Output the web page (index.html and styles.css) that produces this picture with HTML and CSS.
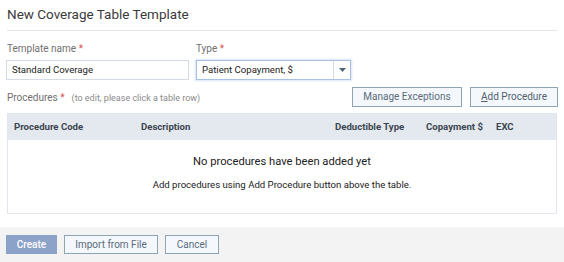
FILE: index.html
```html
<!DOCTYPE html>
<html>
<head>
<meta charset="utf-8">
<link rel="stylesheet" href="styles.css">
</head>
<body>
<div class="dialog">
  <div class="content">
    <h1 class="title">New Coverage Table Template</h1>
    <div class="fields">
      <div class="field name-field">
        <label class="label">Template name <span class="req">*</span></label>
        <div class="input">Standard Coverage</div>
      </div>
      <div class="field type-field">
        <label class="label">Type <span class="req">*</span></label>
        <div class="select">
          <span class="select-text">Patient Copayment, $</span>
          <span class="select-arrow"><svg width="7" height="4" viewBox="0 0 7 4"><path d="M0 0 L7 0 L3.5 4 Z" fill="#4d6577"/></svg></span>
        </div>
      </div>
    </div>
    <div class="proc-bar">
      <div class="proc-label">Procedures <span class="req">*</span><span class="hint">(to edit, please click a table row)</span></div>
      <div class="proc-actions">
        <button class="btn btn-manage">Manage Exceptions</button>
        <button class="btn btn-add"><u>A</u>dd Procedure</button>
      </div>
    </div>
    <div class="table">
      <div class="thead">
        <div class="th c-code">Procedure Code</div>
        <div class="th c-desc">Description</div>
        <div class="th c-ded">Deductible Type</div>
        <div class="th c-cop">Copayment $</div>
        <div class="th c-exc">EXC</div>
      </div>
      <div class="empty">
        <div class="empty-title">No procedures have been added yet</div>
        <div class="empty-sub">Add procedures using Add Procedure button above the table.</div>
      </div>
    </div>
  </div>
  <div class="footer">
    <button class="btn btn-create">Create</button>
    <button class="btn btn-import">Import from File</button>
    <button class="btn btn-cancel">Cancel</button>
  </div>
</div>
</body>
</html>
```
FILE: styles.css
```css
html, body {
  margin: 0;
  padding: 0;
  background: #ffffff;
}
body {
  font-family: Roboto, "Liberation Sans", Arial, sans-serif;
  color: #333333;
  width: 564px;
  height: 262px;
  overflow: hidden;
}
.dialog {
  display: flex;
  flex-direction: column;
  height: 262px;
}
.content {
  padding: 0 7px;
  flex: 1;
}
.title {
  margin: 0;
  font-size: 13.5px;
  font-weight: 400;
  color: #3a3a3a;
  line-height: 18px;
  padding-top: 5px;
  padding-bottom: 7px;
  border-bottom: 1px solid #e4e4e4;
}
.fields {
  display: flex;
  gap: 7px;
  margin-top: 11px;
}
.field {
  display: flex;
  flex-direction: column;
}
.label {
  font-size: 10px;
  color: #707070;
  line-height: 14px;
  margin-bottom: 4px;
}
.req {
  color: #d9534f;
}
.input {
  width: 176px;
  height: 18px;
  margin-left: -1px;
  border: 1px solid #d5dbe2;
  font-size: 9.6px;
  line-height: 18px;
  padding-left: 5px;
  color: #222;
}
.select {
  width: 153px;
  height: 18px;
  border: 1px solid #a9c0e6;
  box-shadow: 0 0 2px 1px #d9e5fb;
  display: flex;
  font-size: 9.6px;
  color: #222;
}
.select-text {
  flex: 1;
  padding-left: 5px;
  line-height: 18px;
}
.select-arrow {
  width: 16px;
  border-left: 1px solid #d5dbe2;
  display: flex;
  align-items: center;
  justify-content: center;
}
.proc-bar {
  display: flex;
  justify-content: space-between;
  align-items: center;
  margin-top: 6px;
  height: 21px;
}
.proc-label {
  font-size: 10px;
  color: #707070;
  padding-top: 1px;
}
.hint {
  font-size: 9px;
  color: #8a8a8a;
  margin-left: 7px;
}
.proc-actions {
  display: flex;
  gap: 8px;
  margin-right: -1px;
}
.btn {
  font-family: Roboto, "Liberation Sans", Arial, sans-serif;
  font-size: 10px;
  height: 20px;
  line-height: 16px;
  padding: 0;
  white-space: nowrap;
  border: 1px solid #8fa4b4;
  background: #f4f7fb;
  color: #5b6b7b;
  box-sizing: border-box;
  cursor: pointer;
}
.btn-manage {
  width: 110px;
}
.btn-add {
  width: 88px;
  color: #4f5f6f;
}
.btn-add u {
  text-decoration-thickness: 1px;
  text-underline-offset: 1px;
}
.table {
  margin-top: 6px;
  border: 1px solid #e2e6ec;
  border-top: none;
}
.thead {
  display: flex;
  background: #e4e8ef;
  height: 27px;
  align-items: center;
  font-size: 9.6px;
  font-weight: 700;
  color: #3c4650;
}
.th {
  flex: none;
}
.c-code {
  width: 127px;
  padding-left: 6px;
}
.c-desc {
  width: 194px;
}
.c-ded {
  width: 91px;
}
.c-cop {
  width: 70px;
}
.c-exc {
  width: 40px;
}
.empty {
  height: 73px;
  display: flex;
  flex-direction: column;
  align-items: center;
}
.empty-title {
  font-size: 11.2px;
  color: #222;
  margin-top: 14px;
  line-height: 16px;
}
.empty-sub {
  font-size: 9.6px;
  color: #222;
  margin-top: 8px;
  line-height: 13px;
}
.footer {
  background: #f3f3f3;
  height: 35px;
  display: flex;
  align-items: center;
  gap: 7px;
  padding-left: 6px;
}
.footer .btn {
  height: 19px;
}
.btn-create {
  width: 51px;
  background: #8da2c9;
  border-color: #8da2c9;
  color: #ffffff;
  font-weight: 500;
}
.btn-import {
  width: 94px;
}
.btn-cancel {
  width: 54px;
}
```
